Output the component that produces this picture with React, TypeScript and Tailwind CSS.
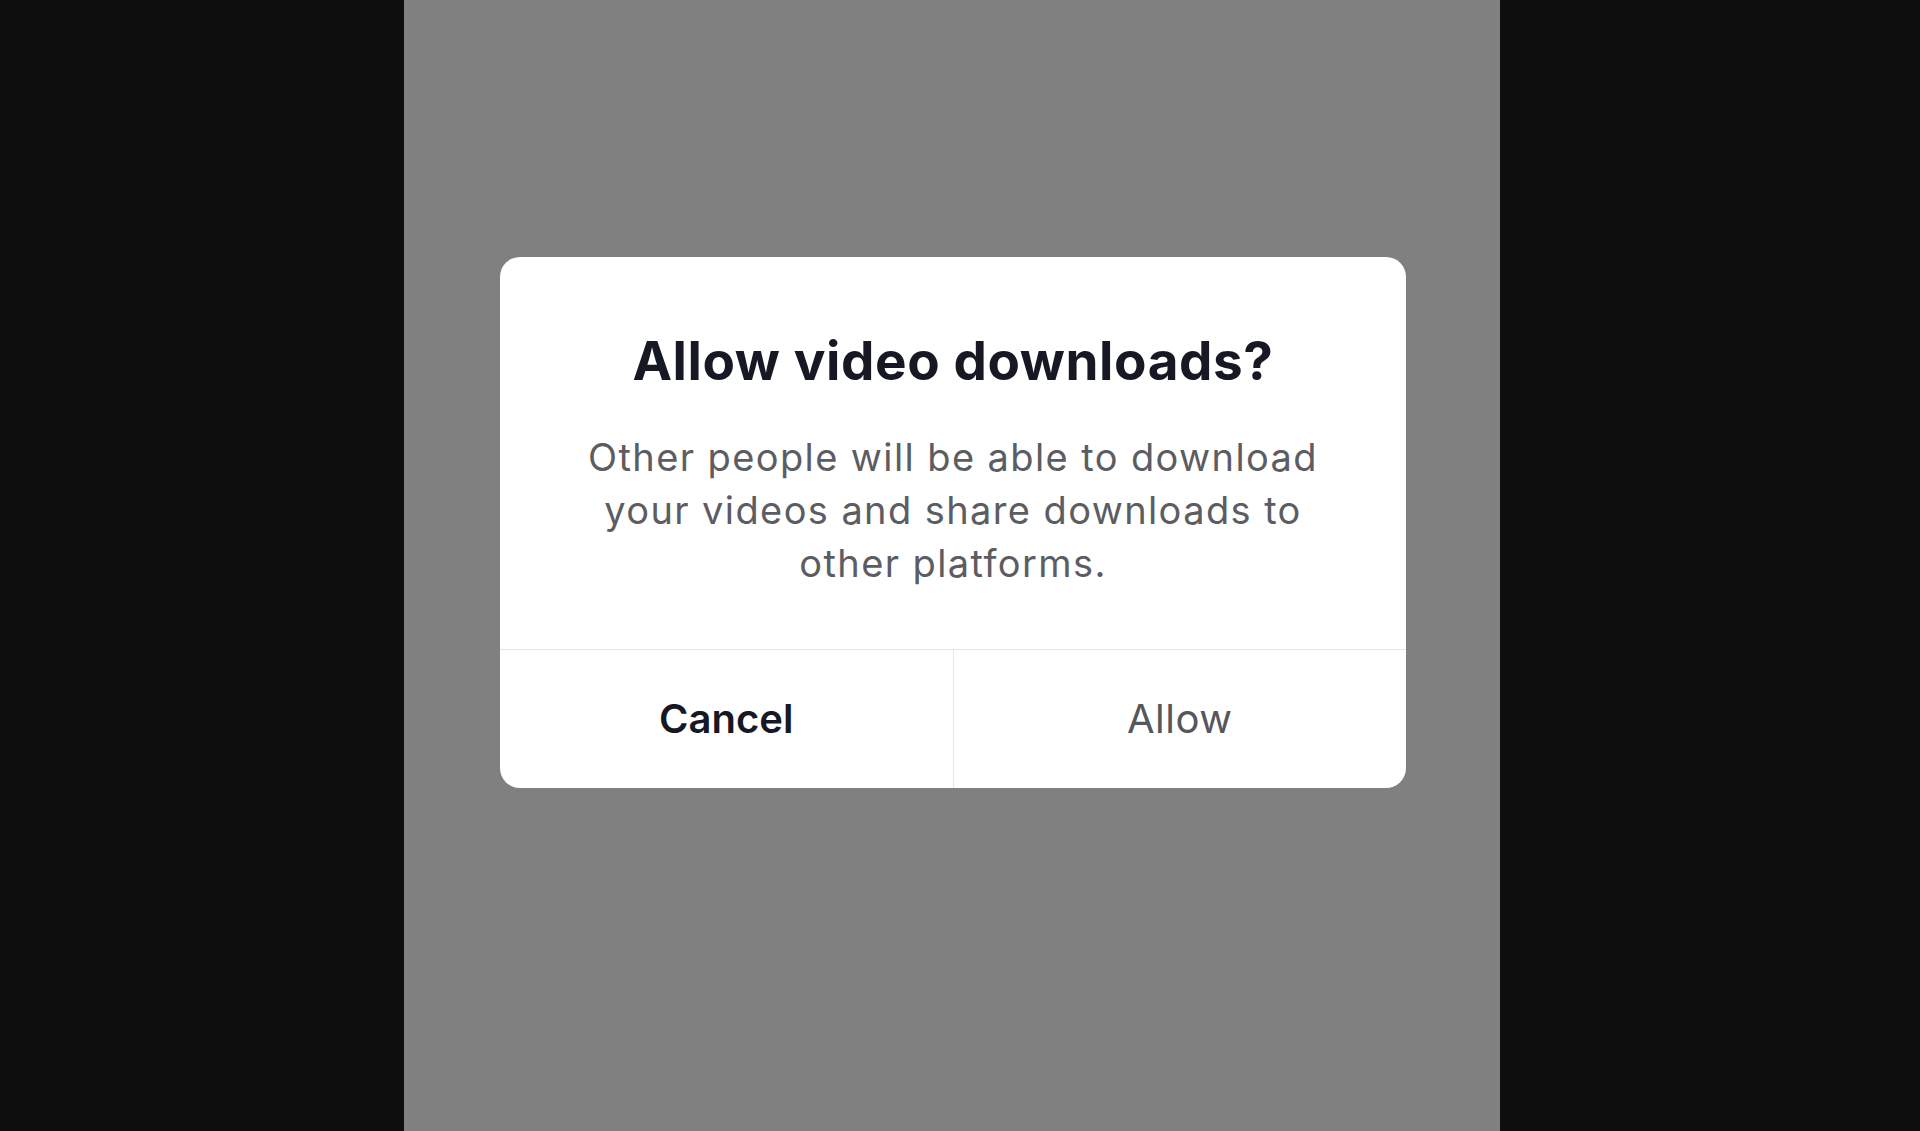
import React from 'react';

const font = { fontFamily: 'Inter, "Noto Sans", sans-serif' };

const App: React.FC = () => {
  return (
    <div className="flex h-[1131px] w-full bg-[#0e0e0e] pl-[404px]" style={font}>
      <div className="flex h-full w-[1096px] flex-col bg-[#808080] pl-[96px] pt-[257px]">
        <div className="flex w-[906px] flex-col overflow-hidden rounded-[20px] bg-white">
          <div className="flex h-[392px] flex-col items-center pt-[72px] text-center">
            <h2 className="text-[53px] font-bold leading-[64px] tracking-[0.6px] text-[#161823]">
              Allow video downloads?
            </h2>
            <p className="mt-[38px] w-[790px] text-[38px] leading-[53px] tracking-[1.4px] text-[#5c5d62]">
              Other people will be able to download your videos and share downloads to other platforms.
            </p>
          </div>
          <div className="flex h-[139px] border-t border-[#e6e6e8]">
            <button className="flex flex-1 items-center justify-center text-[40px] font-semibold text-[#161823]">
              Cancel
            </button>
            <div className="w-px bg-[#e6e6e8]" />
            <button className="flex flex-1 items-center justify-center text-[40px] tracking-[0.5px] text-[#55575c]">
              Allow
            </button>
          </div>
        </div>
      </div>
    </div>
  );
};

export default App;
